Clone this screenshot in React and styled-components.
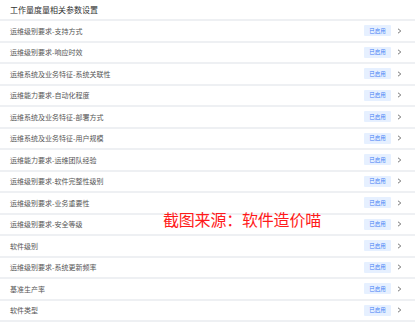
import React from "react";
import styled, { createGlobalStyle } from "styled-components";

const GlobalStyle = createGlobalStyle`
  html, body {
    margin: 0;
    padding: 0;
    background: #fff;
    font-family: "Noto Sans CJK SC", "Liberation Sans", sans-serif;
  }
`;

const Page = styled.div`
  position: relative;
  width: 415px;
  height: 326px;
  overflow: hidden;
  background: #fff;
`;

const Header = styled.div`
  height: 21px;
  box-sizing: border-box;
  display: flex;
  align-items: center;
  padding-left: 10px;
  font-size: 8px;
  color: #333;
  border-bottom: 2px solid #eef0f3;
`;

const List = styled.div`
  display: flex;
  flex-direction: column;
`;

const Row = styled.div`
  height: 21.5px;
  box-sizing: border-box;
  display: flex;
  align-items: center;
  padding: 0 13px 0 10px;
  border-bottom: 2px solid #eef0f3;
`;

const Label = styled.span`
  flex: 1;
  font-size: 7px;
  color: #555;
  white-space: nowrap;
`;

const Badge = styled.span`
  width: 27px;
  height: 11px;
  display: flex;
  align-items: center;
  justify-content: center;
  background: #e6f0ff;
  color: #3f7cf5;
  font-size: 5.5px;
  border-radius: 1px;
  margin-right: 6px;
`;

const Chevron = styled.svg`
  width: 5px;
  height: 6px;
`;

const Watermark = styled.div`
  position: absolute;
  left: 163px;
  top: 209px;
  font-size: 16px;
  line-height: 20px;
  color: #ff1a1a;
  white-space: nowrap;
  letter-spacing: -0.2px;
`;

const items = [
  "运维级别要求-支持方式",
  "运维级别要求-响应时效",
  "运维系统及业务特征-系统关联性",
  "运维能力要求-自动化程度",
  "运维系统及业务特征-部署方式",
  "运维系统及业务特征-用户规模",
  "运维能力要求-运维团队经验",
  "运维级别要求-软件完整性级别",
  "运维级别要求-业务重要性",
  "运维级别要求-安全等级",
  "软件级别",
  "运维级别要求-系统更新频率",
  "基准生产率",
  "软件类型",
];

export default function App() {
  return (
    <Page>
      <GlobalStyle />
      <Header>工作量度量相关参数设置</Header>
      <List>
        {items.map((name) => (
          <Row key={name}>
            <Label>{name}</Label>
            <Badge>已启用</Badge>
            <Chevron viewBox="0 0 5 6">
              <path d="M1 0.8 L3.8 3 L1 5.2" fill="none" stroke="#777" strokeWidth="1" />
            </Chevron>
          </Row>
        ))}
      </List>
      <Watermark>截图来源：软件造价喵</Watermark>
    </Page>
  );
}
